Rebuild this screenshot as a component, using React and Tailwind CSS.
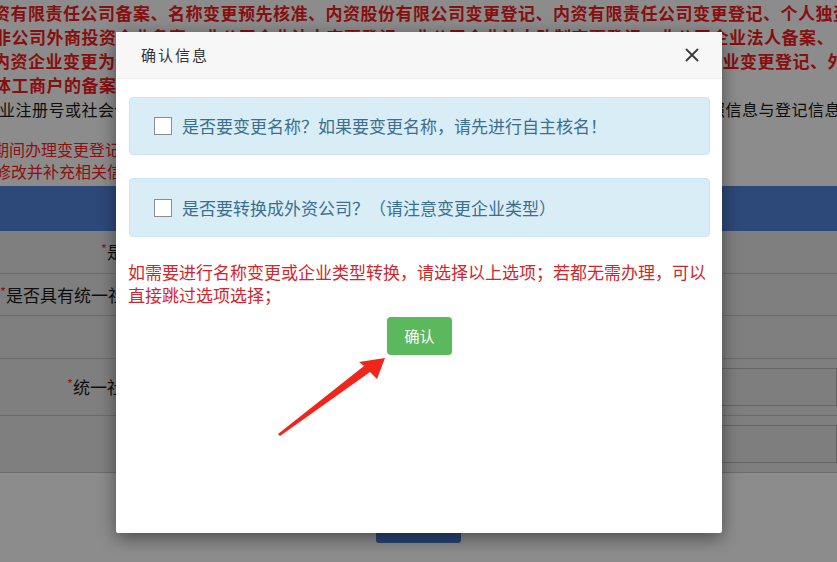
import React from "react";

function Row({ label, h, input }) {
  return (
    <div className={`flex items-center border-b border-[#c4c4c4] ${h}`}>
      <div className="w-[226px] shrink-0 whitespace-nowrap text-right text-[17px] text-[#1a1a1a]">
        {label && (
          <>
            <span className="text-[#ff2a2a] text-[13px] align-top">*</span>
            {label}
          </>
        )}
      </div>
      <div className="flex-1 pl-[24px]">
        {input && <div className="h-[38px] border border-[#b8b8b8] bg-[#e6e6e6]" />}
      </div>
    </div>
  );
}

export default function App() {
  return (
    <div className="relative w-[837px] h-[562px] overflow-hidden bg-white font-['Noto_Sans_CJK_SC','Noto_Sans',sans-serif]">
      {/* background page */}
      <div className="pt-[1px] whitespace-nowrap">
        <div className="text-[17px] leading-[24px] font-bold text-[#f51c1c] tracking-[0.5px]">
          <div className="ml-[-7px]">资有限责任公司备案、名称变更预先核准、内资股份有限公司变更登记、内资有限责任公司变更登记、个人独资企业</div>
          <div className="ml-[-6px]">非公司外商投资企业备案、非公司企业法人变更登记、非公司企业法人改制变更登记、非公司企业法人备案、</div>
          <div className="flex justify-between">
            <span className="ml-[-7px]">内资企业变更为外商投资企业</span>
            <span className="mr-[-8px]">外商投资企业变更登记、外</span>
          </div>
          <div className="ml-[-6px]">体工商户的备案、</div>
        </div>
        <div className="flex justify-between text-[16px] leading-[24px] text-[#1a1a1a] tracking-[0.5px]">
          <span className="ml-[-1px]">业注册号或社会信用代码</span>
          <span className="mr-[-4px]">营业执照信息与登记信息</span>
        </div>
        <div className="mt-[17px] text-[16px] leading-[22px] text-[#ff2222]">
          <div className="ml-[-7px]">期间办理变更登记的企业</div>
          <div className="ml-[-5px]">修改并补充相关信息</div>
        </div>
        <div className="mt-[4px] h-[45px] bg-[#5386dd]" />
        <div className="bg-[#e8e8e8]">
          <Row h="h-[43px]" label="是否外资企业：" />
          <Row h="h-[42px]" label="是否具有统一社会信用代码：" />
          <Row h="h-[43px]" />
          <Row h="h-[57px]" label="统一社会信用代码：" input />
          <Row h="h-[57px]" input />
        </div>
        <div className="mt-[33px] mx-auto w-[85px] h-[37px] rounded-[3px] bg-[#4a7fd6]" />
      </div>

      {/* overlay */}
      <div className="absolute inset-0 bg-black/[0.45]" />

      {/* modal */}
      <div className="absolute left-[116px] top-[32px] w-[606px] h-[501px] bg-white rounded-[2px] shadow-[0_5px_18px_rgba(0,0,0,0.45)] flex flex-col">
        <div className="h-[47px] shrink-0 bg-[#f7f7f8] border-b border-[#f0f0f0] flex items-center justify-between pl-[25px] pr-[23px]">
          <span className="text-[15px] tracking-[2px] text-[#333]">确认信息</span>
          <svg width="14" height="14" viewBox="0 0 14 14">
            <line x1="1.5" y1="1.5" x2="12.5" y2="12.5" stroke="#3a3a3a" strokeWidth="1.8" strokeLinecap="round" />
            <line x1="12.5" y1="1.5" x2="1.5" y2="12.5" stroke="#3a3a3a" strokeWidth="1.8" strokeLinecap="round" />
          </svg>
        </div>
        <div className="pl-[13px] pr-[12px] pt-[18px]">
          <div className="h-[58px] rounded-[4px] bg-[#d9edf7] border border-[#cbe5f1] flex items-center pl-[24px]">
            <span className="w-[18px] h-[18px] shrink-0 border border-[#8c8c8c] bg-white" />
            <span className="ml-[10px] text-[17px] text-[#3b6f90] whitespace-nowrap">是否要变更名称？如果要变更名称，请先进行自主核名！</span>
          </div>
          <div className="mt-[23px] h-[59px] rounded-[4px] bg-[#d9edf7] border border-[#cbe5f1] flex items-center pl-[24px]">
            <span className="w-[18px] h-[18px] shrink-0 border border-[#8c8c8c] bg-white" />
            <span className="ml-[10px] text-[17px] text-[#3b6f90] whitespace-nowrap">是否要转换成外资公司？（请注意变更企业类型）</span>
          </div>
          <div className="mt-[23px] ml-[-1px] text-[17px] leading-[23px] text-[#d0262f] whitespace-nowrap">
            <div>如需要进行名称变更或企业类型转换，请选择以上选项；若都无需办理，可以</div>
            <div>直接跳过选项选择；</div>
          </div>
          <div className="mt-[11px] flex justify-center">
            <button className="w-[65px] h-[38px] rounded-[4px] bg-[#5cb85c] text-white text-[15px]">确认</button>
          </div>
        </div>
      </div>

      {/* red arrow annotation */}
      <svg className="absolute left-0 top-0 pointer-events-none" width="837" height="562" viewBox="0 0 837 562">
        <polygon
          points="278,434 364,366 359,362 385,358 377,379 370,372 280,436"
          fill="#f0261c"
        />
      </svg>
    </div>
  );
}
